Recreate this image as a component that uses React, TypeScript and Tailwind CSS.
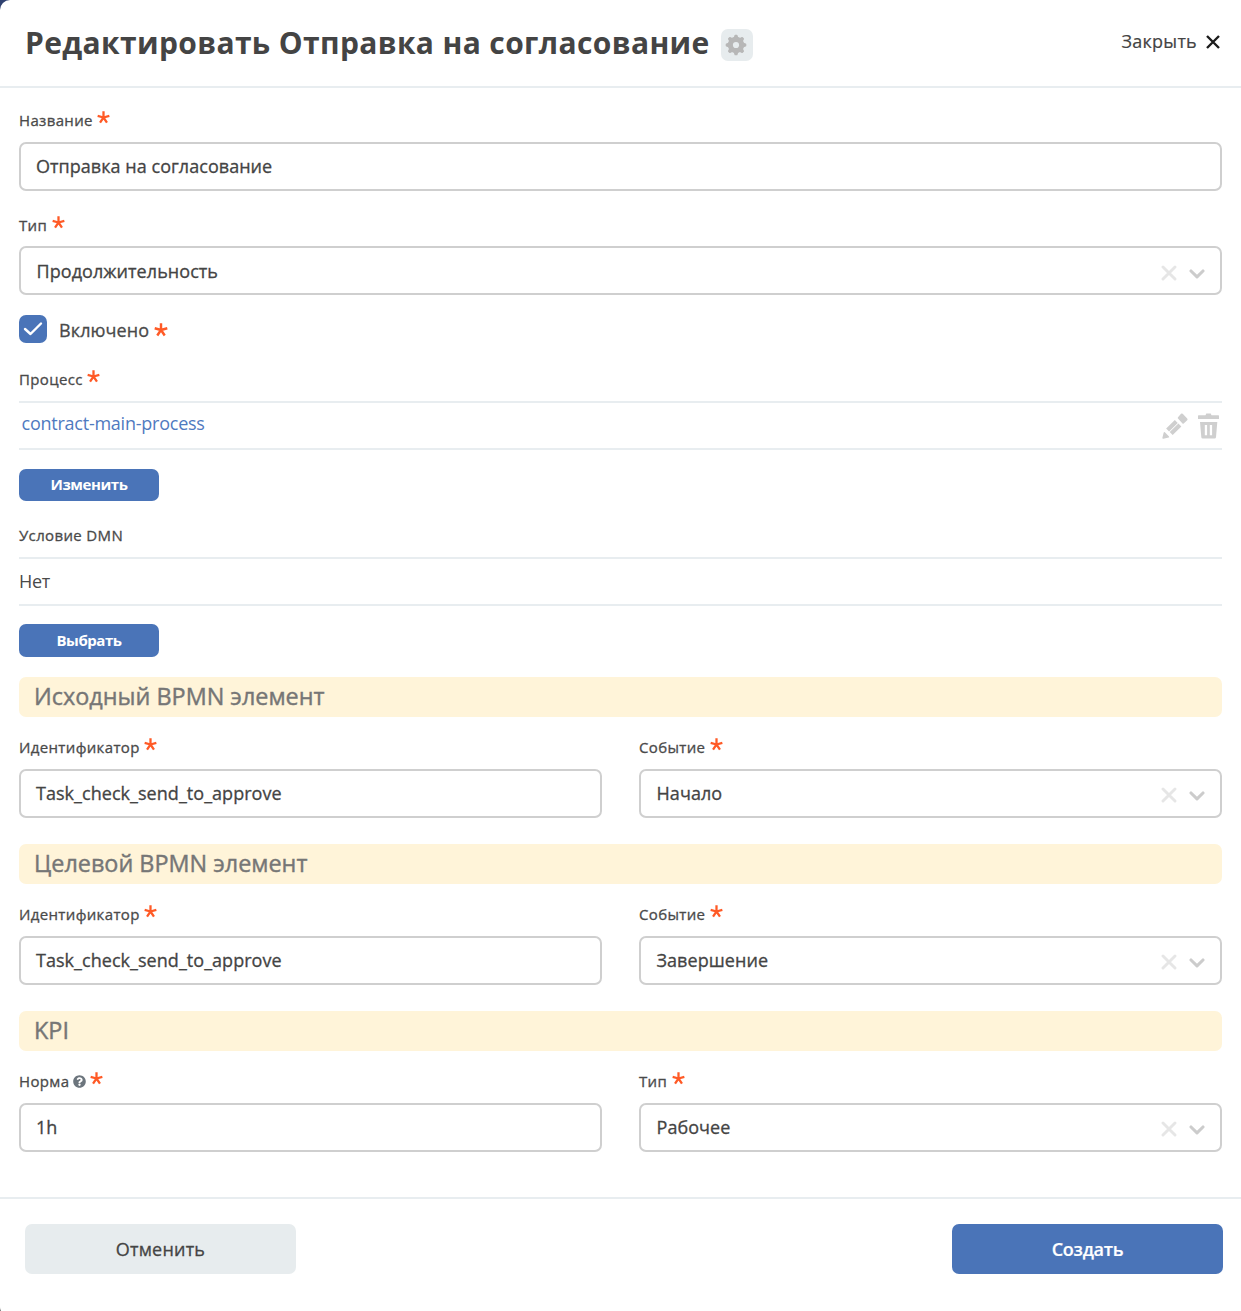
import React from "react";
import { FaQuestionCircle } from "react-icons/fa";

function Star({ big = false }: { big?: boolean }) {
  return (
    <svg viewBox="0 0 12 12" className={big ? "h-[14px] w-[14px] shrink-0" : "h-[13px] w-[13px] shrink-0"} fill="none" stroke="#ff5a26" strokeWidth="2.100">
      <path d="M6 6.200V.3M6 6 .6 4.500M6 6l5.400-1.500M6 6l-3.200 4.700M6 6l3.200 4.700" />
    </svg>
  );
}

function Gear() {
  return (
    <svg viewBox="0 0 22 22" className="-ml-px h-[22px] w-[22px]">
      <g fill="#b7b7b7">
        {[0, 45, 90, 135].map((angle) => (
          <path key={angle} d="M9.500 1.300Q9.700.7 10.300.7h1.400q.6 0 .8.6L13.400 4v14l-.9 2.700q-.2.6-.8.6h-1.400q-.6 0-.8-.6L8.600 18V4z" transform={`rotate(${angle} 11 11)`} />
        ))}
        <circle cx="11" cy="11" r="8.200" />
      </g>
      <circle cx="11" cy="11" r="3.100" fill="#e7ecee" />
    </svg>
  );
}

function Label({ text, required = true, help = false }: { text: string; required?: boolean; help?: boolean }) {
  return (
    <div className="flex h-6 items-center text-[15px] font-medium leading-6 tracking-[0.35px] text-[#4a4a4a] [-webkit-text-stroke:0.3px]">
      <span>{text}</span>
      {help && <FaQuestionCircle className="ml-[3.500px] h-[13px] w-[13px] text-[#6c757d]" />}
      {required && (
        <span className="mb-[5px] ml-[4.500px]">
          <Star />
        </span>
      )}
    </div>
  );
}

function Input({ value }: { value: string }) {
  return (
    <div className="flex h-[49px] items-center rounded-[7px] border-2 border-[#cfcfcf] pl-[15px] text-[18px] font-medium tracking-[0.04px] text-[#444] [-webkit-text-stroke:0.3px]">
      {value}
    </div>
  );
}

function Select({ value, low = false }: { value: string; low?: boolean }) {
  return (
    <div className={`flex h-[49px] items-center rounded-[7px] border-2 border-[#cfcfcf] pl-[15.500px] pr-[15px] text-[18px] font-medium tracking-[0.06px] text-[#444] [-webkit-text-stroke:0.3px] ${low ? "pt-[2px]" : ""}`}>
      <span className="flex-1">{value}</span>
      <svg viewBox="0 0 16 16" className="mt-[3px] h-4 w-4" fill="none" stroke="#e6e6e6" strokeWidth="2.900" strokeLinecap="round">
        <path d="M2 2l12 12M14 2 2 14" />
      </svg>
      <svg viewBox="0 0 16 10" className="ml-3 mt-1 h-[10px] w-4" fill="none" stroke="#cccccc" strokeWidth="3.100" strokeLinecap="round" strokeLinejoin="round">
        <path d="M2 2l6 5.800L14 2" />
      </svg>
    </div>
  );
}

function Section({ text }: { text: string }) {
  return (
    <div className="flex h-10 items-center rounded-[7px] bg-[#fff4d9] pb-[2px] pl-[15px] text-[23.400px] font-medium leading-[38px] text-[#767676] [-webkit-text-stroke:0.4px]">
      {text}
    </div>
  );
}

function SmallButton({ text, tall = false }: { text: string; tall?: boolean }) {
  return (
    <button className={`flex w-[140px] items-center justify-center rounded-[7px] bg-[#4a74b8] pb-px text-[15px] font-bold tracking-[-0.45px] text-white ${tall ? "h-[33px]" : "h-8"}`}>
      {text}
    </button>
  );
}

function Pair({ left, leftValue, right, rightValue, help = false }: { left: string; leftValue: string; right: string; rightValue: string; help?: boolean }) {
  return (
    <div className="mt-[18px] grid grid-cols-2 gap-x-[37px]">
      <div>
        <Label text={left} help={help} />
        <div className="mt-[10px]">
          <Input value={leftValue} />
        </div>
      </div>
      <div>
        <Label text={right} />
        <div className="mt-[10px]">
          <Select value={rightValue} />
        </div>
      </div>
    </div>
  );
}

export default function App() {
  return (
    <div className="h-[1311px] w-[1241px] overflow-hidden bg-linear-to-b from-[#2f4170] to-[#444] font-['Open_Sans',sans-serif]">
      <div className="flex h-[1317px] flex-col rounded-l-[10px] bg-white">
        <header className="flex h-[88px] items-center justify-between border-b-2 border-[#e8edf0] pl-[25px] pr-[21px]">
          <div className="flex items-center">
            <h1 className="mb-px text-[30px] font-bold tracking-[0.36px] text-[#444]">Редактировать Отправка на согласование</h1>
            <button className="ml-[11px] mt-[3px] flex h-8 w-8 items-center justify-center rounded-[7px] bg-[#e7ecee]">
              <Gear />
            </button>
          </div>
          <button className="mb-[3px] flex items-center text-[18px] tracking-[0.25px] text-[#444] [-webkit-text-stroke:0.2px]">
            Закрыть
            <svg viewBox="0 0 14 14" className="ml-[9px] h-[14px] w-[14px]" fill="none" stroke="#1c1c1c" strokeWidth="2.400">
              <path d="M1 1l12 12M13 1 1 13" />
            </svg>
          </button>
        </header>

        <main className="flex-1 px-[19px] pt-5">
          <Label text="Название" />
          <div className="mt-[10px]">
            <Input value="Отправка на согласование" />
          </div>
          <div className="mt-[22px]">
            <Label text="Тип" />
          </div>
          <div className="mt-[9px]">
            <Select value="Продолжительность" low />
          </div>

          <div className="mt-5 flex h-7 items-center">
            <span className="flex h-7 w-7 items-center justify-center rounded-[7px] bg-[#4a74b8]">
              <svg viewBox="0 0 20 16" className="h-4 w-5" fill="none" stroke="#fff" strokeWidth="2.400" strokeLinecap="round" strokeLinejoin="round">
                <path d="M2 8l5.500 5L18 2.500" />
              </svg>
            </span>
            <span className="ml-3 mr-[5px] mt-[2px] text-[18px] font-medium tracking-[0.1px] text-[#4a4a4a] [-webkit-text-stroke:0.3px]">Включено</span>
            <span className="mt-[2px]">
              <Star big />
            </span>
          </div>

          <div className="mt-6">
            <Label text="Процесс" />
          </div>
          <div className="mt-[10px] flex h-[49px] items-center justify-between border-y-2 border-[#e8edf0] pl-[2.500px] pr-[3px]">
            <a className="mb-1 text-[18px] tracking-[-0.24px] text-[#4f7abf]">contract-main-process</a>
            <div className="mt-px flex gap-[10px] text-[#cfcfcf]">
              <svg viewBox="0 0 26 26" className="h-[26px] w-[26px]" fill="currentColor">
                <path d="M16 4.300 19 .8Q19.800 0 20.700.8L25.200 5.500Q26 6.400 25.200 7.300L21.700 10.500q-.6.5-1.200-.1L16 5.600q-.6-.6 0-1.300zM.4 24.800 1.700 19.500q.4-1 1.200-.3L7 23.400q.6.8-.3 1.200L1.400 25.800q-1.200.2-1-1z" />
                <path d="M5.600 16.900 14.300 8.400M9.200 20.500 17.900 12" fill="none" stroke="currentColor" strokeWidth="4.200" strokeLinecap="butt" />
              </svg>
              <svg viewBox="0 0 21 26" className="h-[26px] w-[21px]" fill="currentColor">
                <path d="M.6 2.300H7.500L8.300.5h4.400l.8 1.800h6.900q.6 0 .6.600V6H0V2.900q0-.6.600-.6zM2 9h17.300l-1.300 15.200q-.2 1.300-1.400 1.300H4.700q-1.200 0-1.400-1.300zM6.800 12v10.200h2.300V12zm5 0v10.200h2.300V12z" fillRule="evenodd" />
              </svg>
            </div>
          </div>
          <div className="mt-[19px]">
            <SmallButton text="Изменить" />
          </div>

          <div className="mt-[22px]">
            <Label text="Условие DMN" required={false} />
          </div>
          <div className="mt-[10px] flex h-[49px] items-center border-y-2 border-[#e8edf0] text-[18px] tracking-[-0.3px] text-[#4a4a4a]">Нет</div>
          <div className="mb-5 mt-[18px]">
            <SmallButton text="Выбрать" tall />
          </div>

          <Section text="Исходный BPMN элемент" />
          <Pair left="Идентификатор" leftValue="Task_check_send_to_approve" right="Событие" rightValue="Начало" />
          <div className="mt-[26px]">
            <Section text="Целевой BPMN элемент" />
          </div>
          <Pair left="Идентификатор" leftValue="Task_check_send_to_approve" right="Событие" rightValue="Завершение" />
          <div className="mt-[26px]">
            <Section text="KPI" />
          </div>
          <Pair left="Норма" leftValue="1h" right="Тип" rightValue="Рабочее" help />
        </main>

        <footer className="flex h-[120px] items-start justify-between border-t-2 border-[#e8edf0] pl-[25px] pr-[18px] pt-[25px]">
          <button className="h-[50px] w-[271px] rounded-[7px] bg-[#e7ecee] text-[18px] font-medium tracking-[0.2px] text-[#444] [-webkit-text-stroke:0.3px]">Отменить</button>
          <button className="h-[50px] w-[271px] rounded-[7px] bg-[#4a74b8] text-[18px] font-semibold tracking-[-0.25px] text-white [-webkit-text-stroke:0.2px]">Создать</button>
        </footer>
      </div>
    </div>
  );
}
